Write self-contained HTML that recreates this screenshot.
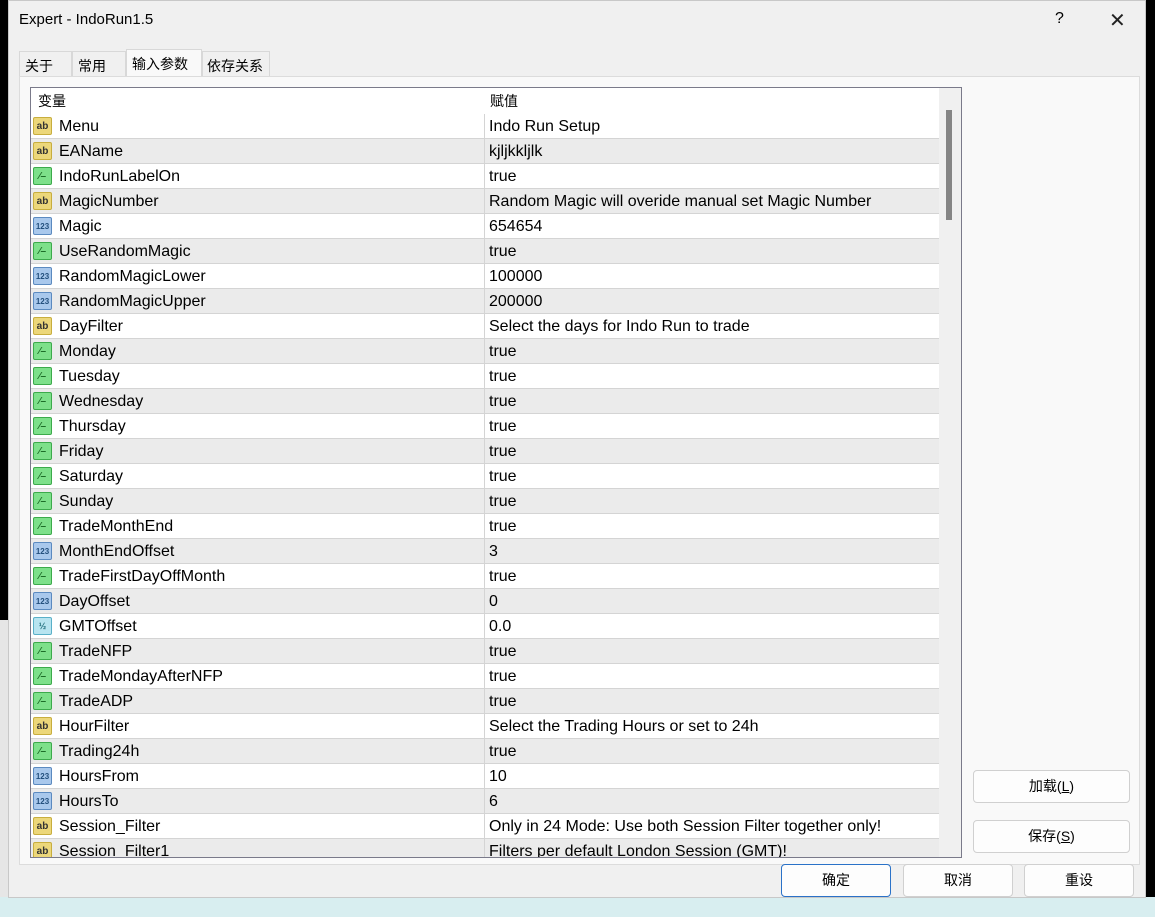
<!DOCTYPE html><html><head><meta charset="utf-8"><style>
*{margin:0;padding:0;box-sizing:border-box}
body{width:1155px;height:917px;overflow:hidden;background:#d8eef0;font-family:"Liberation Sans","Noto Sans CJK SC",sans-serif;position:relative}
.lstrip{position:absolute;left:0;top:0;width:8px;height:897px;background:#e6e6e6}
.lstrip .blk{position:absolute;left:0;top:0;width:8px;height:620px;background:#000}
.rstrip{position:absolute;left:1146px;top:0;width:9px;height:897px;background:#000}
.dlg{position:absolute;left:8px;top:0;width:1138px;height:898px;background:#f0f0f0;border:1px solid #c8c8c8}
.title{position:absolute;left:10px;top:10px;font-size:15px;color:#000}
.q{position:absolute;left:1046px;top:9px;font-size:16px}
.x{position:absolute;left:1100px;top:7px;font-size:20px;font-weight:300;color:#222}
.tab{position:absolute;top:50px;height:26px;font-size:14px;padding:4px 0 0 5px;border:1px solid #d8d8d8;border-bottom:none;background:#f0f0f0;white-space:nowrap;overflow:hidden}
.tab.a{top:48px;height:28px;background:#f9f9f9}
.panel{position:absolute;left:10px;top:75px;width:1121px;height:789px;background:#f9f9f9;border:1px solid #dcdcdc}
.tbl{position:absolute;left:21px;top:86px;width:932px;height:771px;border:1px solid #7a7a8a;background:#fff;overflow:hidden}
.hdr{height:26px;font-size:14px;line-height:27px;position:relative}
.hdr span{position:absolute}
.row{height:25px;position:relative;border-bottom:1px solid #d4d4d4;font-size:16px;line-height:25px;width:908px}
.row.g{background:#ebebeb}
.row .n{position:absolute;left:28px}
.row .v{position:absolute;left:453px;border-left:1px solid #d4d4d4;height:24px;padding-left:4px;width:460px}
.ic{position:absolute;left:2px;top:3px;width:19px;height:18px;border-radius:2px;font-size:10px;font-weight:bold;line-height:17px;text-align:center}
.s{background:#ecd77a;border:1px solid #c8ae3e;color:#333}
.b{background:#7de08a;border:1px solid #3caa4b;color:#1d6d28}
.i{background:#a9c8ec;border:1px solid #5b8ac0;color:#24507e;font-size:8px}
.d{background:#b8e4f0;border:1px solid #5ab0c8;color:#24707e;font-size:9px}
.sb{position:absolute;left:908px;top:0;width:22px;height:771px;background:#f0f0f0}
.th{position:absolute;left:7px;top:22px;width:6px;height:110px;background:#858585}
.btn{position:absolute;width:110px;height:33px;border:1px solid #d0d0d0;border-radius:4px;background:#fdfdfd;font-size:14px;text-align:center;line-height:31px}
</style></head><body>
<div class="lstrip"><div class="blk"></div></div>
<div class="rstrip"></div>
<div class="dlg">
<div class="title">Expert - IndoRun1.5</div>
<div class="q">?</div><div class="x">✕</div>
<div class="tab" style="left:10px;width:53px">关于</div>
<div class="tab" style="left:63px;width:54px">常用</div>
<div class="tab a" style="left:117px;width:76px">输入参数</div>
<div class="tab" style="left:193px;width:68px;padding-left:4px">依存关系</div>
<div class="panel"></div>
<div class="tbl">
<div class="hdr"><span style="left:7px">变量</span><span style="left:459px">赋值</span></div>
<div id="rows"></div>
<div class="sb"><div class="th"></div></div>
</div>
<div class="btn" style="left:964px;top:769px;width:157px">加载(<u>L</u>)</div>
<div class="btn" style="left:964px;top:819px;width:157px">保存(<u>S</u>)</div>
<div class="btn" style="left:772px;top:863px;border:1px solid #2a72c8">确定</div>
<div class="btn" style="left:894px;top:863px">取消</div>
<div class="btn" style="left:1015px;top:863px">重设</div>
</div>
<script>
var R=[["s","Menu","Indo Run Setup"],["s","EAName","kjljkkljlk"],["b","IndoRunLabelOn","true"],["s","MagicNumber","Random Magic will overide manual set Magic Number"],["i","Magic","654654"],["b","UseRandomMagic","true"],["i","RandomMagicLower","100000"],["i","RandomMagicUpper","200000"],["s","DayFilter","Select the days for Indo Run to trade"],["b","Monday","true"],["b","Tuesday","true"],["b","Wednesday","true"],["b","Thursday","true"],["b","Friday","true"],["b","Saturday","true"],["b","Sunday","true"],["b","TradeMonthEnd","true"],["i","MonthEndOffset","3"],["b","TradeFirstDayOffMonth","true"],["i","DayOffset","0"],["d","GMTOffset","0.0"],["b","TradeNFP","true"],["b","TradeMondayAfterNFP","true"],["b","TradeADP","true"],["s","HourFilter","Select the Trading Hours or set to 24h"],["b","Trading24h","true"],["i","HoursFrom","10"],["i","HoursTo","6"],["s","Session_Filter","Only in 24 Mode: Use both Session Filter together only!"],["s","Session_Filter1","Filters per default London Session (GMT)!"]];
var L={s:"ab",b:"⁄–",i:"123",d:"½"},h="";
R.forEach(function(r,k){h+='<div class="row'+(k%2?' g':'')+'"><div class="ic '+r[0]+'">'+L[r[0]]+'</div><span class="n">'+r[1]+'</span><span class="v">'+r[2]+'</span></div>'});
document.getElementById("rows").innerHTML=h;
</script>
</body></html>
